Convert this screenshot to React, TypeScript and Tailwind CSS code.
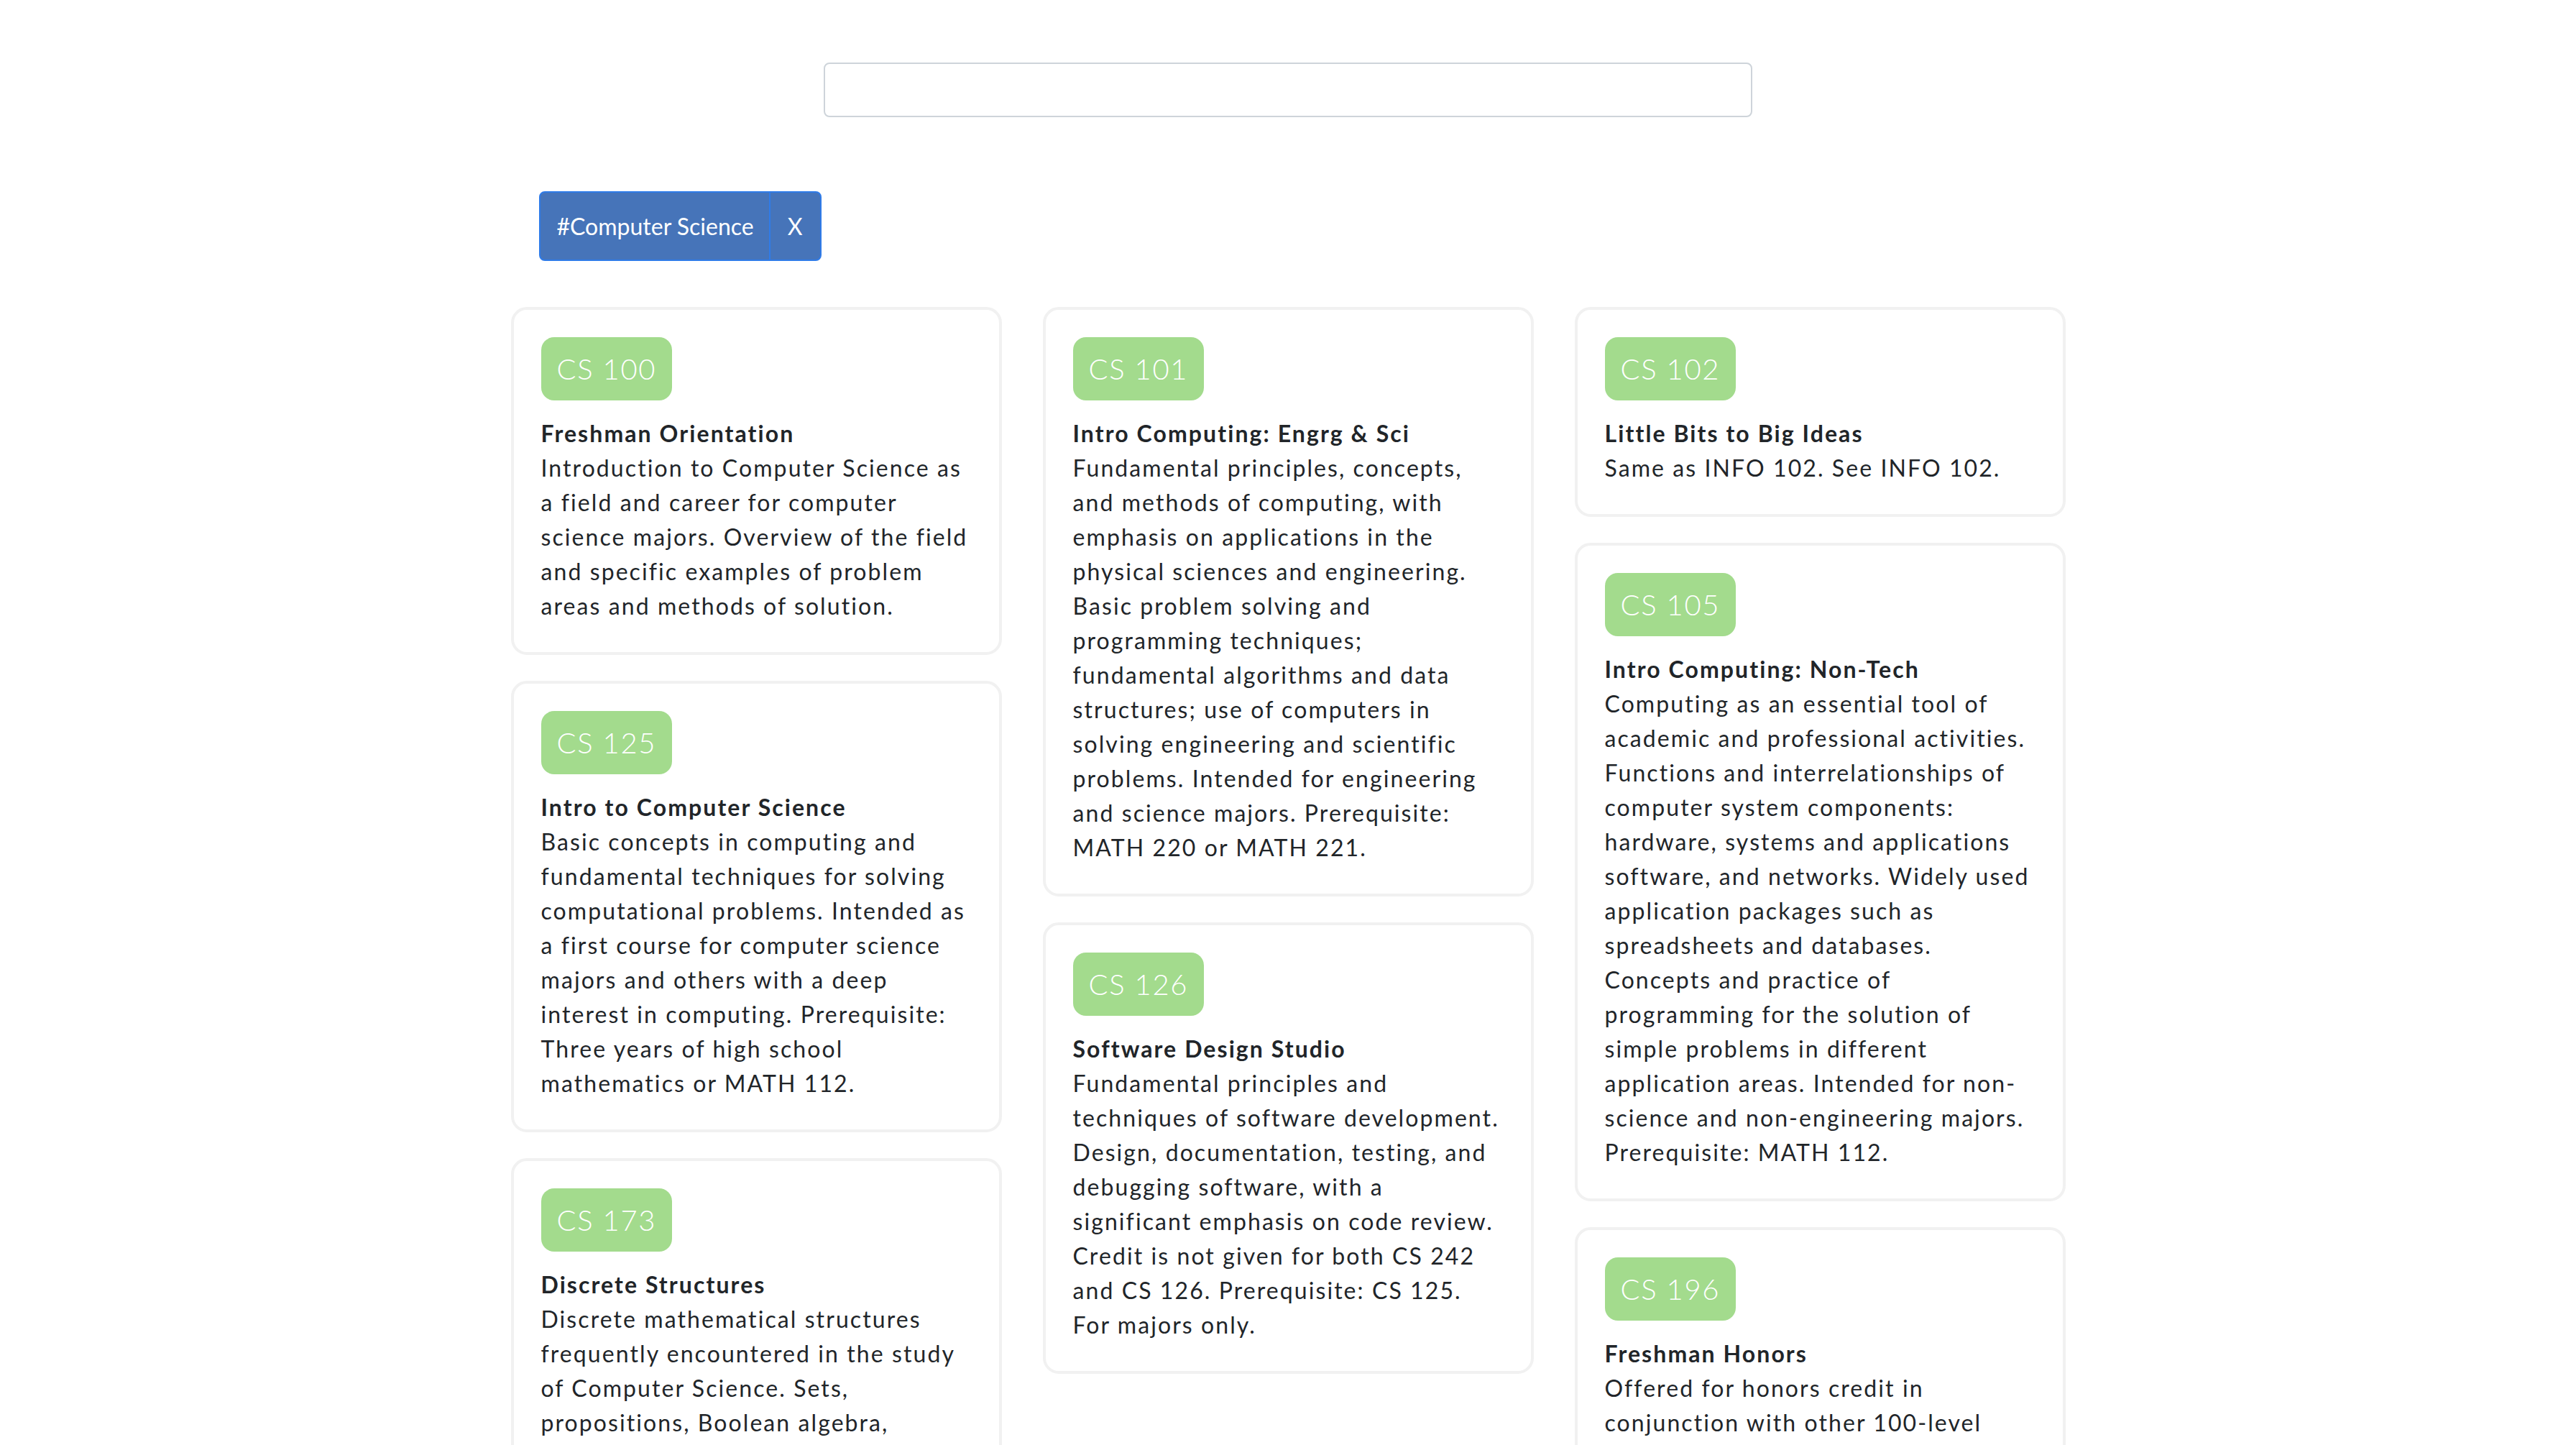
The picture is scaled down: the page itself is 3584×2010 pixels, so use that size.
import React from 'react';

type Course = {
  code: string;
  title: string;
  description: string;
};

const columns: Course[][] = [
  [
    {
      code: 'CS 100',
      title: 'Freshman Orientation',
      description:
        'Introduction to Computer Science as a field and career for computer science majors. Overview of the field and specific examples of problem areas and methods of solution.',
    },
    {
      code: 'CS 125',
      title: 'Intro to Computer Science',
      description:
        'Basic concepts in computing and fundamental techniques for solving computational problems. Intended as a first course for computer science majors and others with a deep interest in computing. Prerequisite: Three years of high school mathematics or MATH 112.',
    },
    {
      code: 'CS 173',
      title: 'Discrete Structures',
      description:
        'Discrete mathematical structures frequently encountered in the study of Computer Science. Sets, propositions, Boolean algebra, induction, recursion, relations, functions, and graphs. Credit is not given for both CS 173 and MATH 213. Prerequisite: One of CS 125, ECE 220; one of MATH 220, MATH 221.',
    },
  ],
  [
    {
      code: 'CS 101',
      title: 'Intro Computing: Engrg & Sci',
      description:
        'Fundamental principles, concepts, and methods of computing, with emphasis on applications in the physical sciences and engineering. Basic problem solving and programming techniques; fundamental algorithms and data structures; use of computers in solving engineering and scientific problems. Intended for engineering and science majors. Prerequisite: MATH 220 or MATH 221.',
    },
    {
      code: 'CS 126',
      title: 'Software Design Studio',
      description:
        'Fundamental principles and techniques of software development. Design, documentation, testing, and debugging software, with a significant emphasis on code review. Credit is not given for both CS 242 and CS 126. Prerequisite: CS 125. For majors only.',
    },
  ],
  [
    {
      code: 'CS 102',
      title: 'Little Bits to Big Ideas',
      description: 'Same as INFO 102. See INFO 102.',
    },
    {
      code: 'CS 105',
      title: 'Intro Computing: Non-Tech',
      description:
        'Computing as an essential tool of academic and professional activities. Functions and interrelationships of computer system components: hardware, systems and applications software, and networks. Widely used application packages such as spreadsheets and databases. Concepts and practice of programming for the solution of simple problems in different application areas. Intended for non-science and non-engineering majors. Prerequisite: MATH 112.',
    },
    {
      code: 'CS 196',
      title: 'Freshman Honors',
      description:
        'Offered for honors credit in conjunction with other 100-level courses taught in the department. Consult the Class Schedule for current offerings. May be repeated to a maximum of 2 hours.',
    },
  ],
];

const CourseCard: React.FC<{ course: Course }> = ({ course }) => {
  return (
    <div className="bg-white border-4 border-[#f1f1f1] rounded-[22px] px-[38px] pt-[38px] pb-[40px]">
      <div className="inline-flex h-[88px] items-center rounded-[18px] bg-[#a3db8d] px-[22px] text-[40px] font-light tracking-[0.04em] text-white">
        {course.code}
      </div>
      <div className="mt-[22px] text-[32px] leading-[48px] tracking-[0.065em] text-[#212529]">
        <h3 className="font-bold">{course.title}</h3>
        <p className="font-normal">{course.description}</p>
      </div>
    </div>
  );
};

const App: React.FC = () => {
  return (
    <div className="min-h-screen bg-white font-['Lato',sans-serif] pb-20">
      {/* Search */}
      <div className="flex justify-center pt-[87px]">
        <input
          type="text"
          className="h-[76px] w-[1292px] rounded-[8px] border-2 border-[#ced4da] bg-white px-6 text-[30px] outline-none"
        />
      </div>

      <div className="mx-auto w-[2163px]">
        {/* Active tag filter */}
        <div className="mt-[103px] pl-[39px]">
          <div className="inline-flex h-[97px] overflow-hidden rounded-[8px] border-2 border-[#2f7be8] bg-[#4674b9] text-[32px] text-white">
            <span className="flex items-center border-r-2 border-[#2f7be8] pl-[23px] pr-[21px]">
              #Computer Science
            </span>
            <button className="flex w-[69px] items-center justify-center">X</button>
          </div>
        </div>

        {/* Course grid */}
        <div className="mt-[64px] flex items-start gap-[57px]">
          {columns.map((col, i) => (
            <div key={i} className="flex w-[683px] flex-col gap-[36px]">
              {col.map((course) => (
                <CourseCard key={course.code} course={course} />
              ))}
            </div>
          ))}
        </div>
      </div>
    </div>
  );
};

export default App;
